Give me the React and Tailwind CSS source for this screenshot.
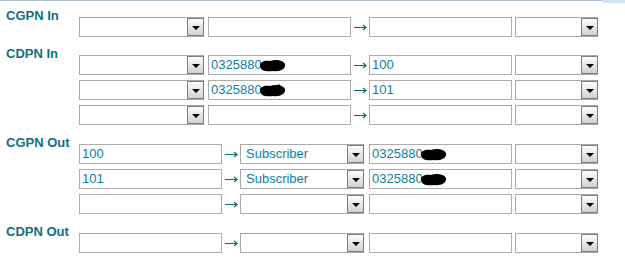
import React from 'react';

// hidden digits in the reference are blacked out with a marker
const Blob = ({ spike }) => (
  <svg width="27" height="13" viewBox="0 0 27 13" className="-ml-[3px] inline-block shrink-0">
    <path d="M1 7 C0 3 6 1 11 2 C16 0 24 1 26 5 C27 10 21 13 14 12 C7 13 2 12 1 7Z" fill="#000" />
    {spike && <path d="M16 3 L20 0 L22 3Z" fill="#000" />}
  </svg>
);

const Select = ({ w, value }) => (
  <div className={`flex h-5 shrink-0 border-y border-l border-[#a9a9a9] bg-white ${w}`}>
    <div className="flex-1 truncate pl-[5px] text-[13px] leading-[18px] text-[#0d7fa3]">{value}</div>
    <div className="flex w-[17px] shrink-0 items-center justify-center border border-[#7e7e7e] bg-linear-to-b from-[#fdfdfd] to-[#d0d0d0]">
      <span className="mt-[2px] h-0 w-0 border-x-[4px] border-t-[4px] border-x-transparent border-t-black" />
    </div>
  </div>
);

const Input = ({ w, children }) => (
  <div className={`flex h-5 shrink-0 items-center border border-[#acacac] bg-white px-[2px] text-[13px] leading-[18px] text-[#0d7fa3] ${w}`}>
    {children}
  </div>
);

const Arrow = () => (
  <div className="flex w-[18px] shrink-0 items-center justify-center">
    <svg width="13" height="7" viewBox="0 0 13 7">
      <path d="M0 3.5 H12 M9 1 L12 3.5 L9 6" stroke="#0b6a6e" strokeWidth="1.2" fill="none" />
    </svg>
  </div>
);

const Masked = ({ spike }) => (
  <span className="inline-flex items-center">
    0325880
    <Blob spike={spike} />
  </span>
);

// select | input -> input | select
const InRow = ({ left, right }) => (
  <div className="flex">
    <Select w="w-[125px]" />
    <div className="ml-[4px]">
      <Input w="w-[143px]">{left}</Input>
    </div>
    <Arrow />
    <Input w="w-[143px]">{right}</Input>
    <div className="ml-[3px]">
      <Select w="w-[83px]" />
    </div>
  </div>
);

// input -> select | input | select
const OutRow = ({ left, mid, right }) => (
  <div className="flex">
    <Input w="w-[143px]">{left}</Input>
    <Arrow />
    <Select w="w-[124px]" value={mid} />
    <div className="ml-[5px]">
      <Input w="w-[143px]">{right}</Input>
    </div>
    <div className="ml-[3px]">
      <Select w="w-[83px]" />
    </div>
  </div>
);

const Section = ({ label, className, children }) => (
  <div className={`flex ${className}`}>
    <div className="w-[73px] shrink-0 text-[13px] font-bold leading-[15px] text-[#0f6f84]">{label}</div>
    <div className="flex flex-col gap-[5px] pt-[9px]">{children}</div>
  </div>
);

export default function App() {
  return (
    <div className="h-[266px] w-[625px] overflow-hidden bg-white font-['Liberation_Sans',Arial,sans-serif]">
      <div className="flex h-[3px] items-start">
        <div className="h-px flex-1 bg-[#b3c3d3]" />
        <div className="h-[3px] w-[22px] bg-[#d3e2f2]" />
      </div>
      <div className="pl-[6px]">
        <Section label="CGPN In" className="mt-[5px]">
          <InRow />
        </Section>
        <Section label="CDPN In" className="mt-[9px]">
          <InRow left={<Masked />} right="100" />
          <InRow left={<Masked spike />} right="101" />
          <InRow />
        </Section>
        <Section label="CGPN Out" className="mt-[10px]">
          <OutRow left="100" mid="Subscriber" right={<Masked />} />
          <OutRow left="101" mid="Subscriber" right={<Masked />} />
          <OutRow />
        </Section>
        <Section label="CDPN Out" className="mt-[10px]">
          <OutRow />
        </Section>
      </div>
    </div>
  );
}
